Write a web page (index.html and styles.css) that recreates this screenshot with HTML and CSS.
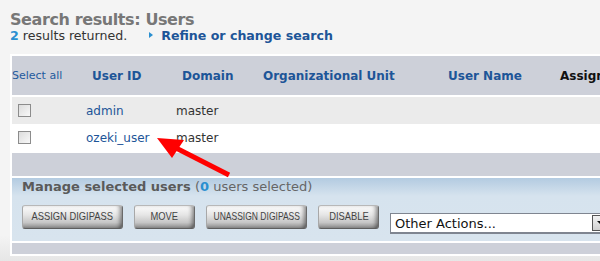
FILE: index.html
```html
<!DOCTYPE html>
<html lang="en">
<head>
<meta charset="UTF-8" />
<title>Search results: Users</title>
<link rel="stylesheet" href="styles.css">
</head>
<body>
  <div class="page">
    <h1>Search results: Users</h1>
    <p class="summary"><b class="count">2</b> results returned. <a class="refine" href="#">Refine or change search</a></p>

    <div class="panel">
      <div class="grid head">
        <span class="select-all">Select all</span>
        <span>User ID</span>
        <span>Domain</span>
        <span>Organizational Unit</span>
        <span>User Name</span>
        <span class="assign">Assigned Digipass</span>
      </div>
      <div class="rows">
        <div class="grid row alt">
          <span><i class="check"></i></span>
          <a href="#">admin</a>
          <span>master</span>
          <span></span>
          <span></span>
          <span></span>
        </div>
        <div class="grid row">
          <span><i class="check"></i></span>
          <a href="#">ozeki_user</a>
          <span>master</span>
          <span></span>
          <span></span>
          <span></span>
        </div>
      </div>
      <div class="band"></div>
      <div class="manage">
        <p class="manage-title"><b>Manage selected users</b> (<b class="count">0</b> users selected)</p>
        <div class="actions">
          <button class="btn wide"><span>ASSIGN DIGIPASS</span></button>
          <button class="btn"><span>MOVE</span></button>
          <button class="btn wide squeeze"><span>UNASSIGN DIGIPASS</span></button>
          <button class="btn"><span>DISABLE</span></button>
          <div class="dropdown">
            <span>Other Actions...</span>
            <i class="dropdown-arrow"></i>
          </div>
        </div>
      </div>
      <div class="band thin"></div>
    </div>
  </div>

  <svg class="pointer" width="600" height="261" viewBox="0 0 600 261">
    <line x1="229" y1="175" x2="176" y2="148" stroke="#f00" stroke-width="5" />
    <polygon points="157,138 184,140 172,158" fill="#f00" />
  </svg>
</body>
</html>
```

FILE: styles.css
```css
* {
  box-sizing: border-box;
}
body {
  margin: 0;
  height: 261px;
  overflow: hidden;
  background: linear-gradient(to bottom, #f4f4f4 0, #f4f4f4 235px, #e6e6e6 261px);
  font-family: "DejaVu Sans", Verdana, sans-serif;
  color: #333;
}
a {
  color: #1d5598;
  text-decoration: none;
}
.page {
  padding: 11px 0 0 10px;
}
h1 {
  margin: 0;
  font-size: 16px;
  line-height: 18px;
  letter-spacing: -0.4px;
  color: #777;
}
.summary {
  margin: 0 0 11px;
  font-size: 12.6px;
  line-height: 14px;
  color: #333;
}
.count {
  color: #2a8fd0;
}
.refine {
  position: relative;
  margin-left: 18px;
  padding-left: 12px;
  font-weight: bold;
  font-size: 12.6px;
  color: #1d5598;
}
.refine::before {
  content: "";
  position: absolute;
  left: 0;
  top: 4px;
  border-left: 4px solid #2a8fd0;
  border-top: 3px solid transparent;
  border-bottom: 3px solid transparent;
}

/* result panel */
.panel {
  width: 720px;
  background: #fff;
  padding: 2px;
  display: flex;
  flex-direction: column;
  gap: 2px;
}
.grid {
  display: grid;
  grid-template-columns: 74px 90px 81px 185px 112px 176px;
  align-items: center;
  font-size: 12px;
}
.head {
  height: 39px;
  background: #cdd0d9;
  font-weight: bold;
  color: #1d5598;
}
.head span {
  padding-left: 6px;
}
.head .select-all {
  padding-left: 0;
  font-weight: normal;
  font-size: 11px;
  color: #1f5a9e;
}
.head .assign {
  color: #111;
  white-space: nowrap;
}
.rows {
  display: flex;
  flex-direction: column;
}
.row {
  height: 27px;
  background: #fff;
}
.row.alt {
  background: #ebebeb;
}
.check {
  display: block;
  width: 13px;
  height: 13px;
  margin-left: 6px;
  border: 1px solid #8c8c8c;
  background: linear-gradient(135deg, #dcdcdc, #f8f8f8);
}
.band {
  height: 23px;
  background: #cdd0d9;
}
.band.thin {
  height: 11px;
}

/* manage selected */
.manage {
  height: 63px;
  padding: 1px 0 0 10px;
  background: linear-gradient(to bottom, #b3cbe1 0, #d6e3ee 18px, #d8e4ee 100%);
}
.manage-title {
  margin: 0;
  font-size: 13px;
  line-height: 16px;
  color: #666;
}
.manage-title b {
  color: #5a5a5a;
}
.manage-title .count {
  color: #2a8fd0;
}
.actions {
  display: flex;
  align-items: flex-start;
  gap: 11px;
  margin-top: 10px;
}
.btn {
  display: flex;
  align-items: center;
  justify-content: center;
  flex: none;
  width: 61px;
  height: 24px;
  padding: 0 0 1px;
  border: 1px solid #8e8e8e;
  border-color: #b8b8b8 #6a6a6a #5e5e5e #a8a8a8;
  border-radius: 3px;
  background: linear-gradient(to bottom, #fbfbfb 0%, #e6e6e6 40%, #c6c6c6 75%, #8c8c8c 100%);
  box-shadow: inset -4px 0 4px -2px rgba(0, 0, 0, 0.45);
  font-family: "Liberation Sans", Arial, sans-serif;
  font-size: 10.4px;
  color: #444;
  white-space: nowrap;
}
.btn span {
  display: inline-block;
  transform: scaleX(0.9);
}
.btn.squeeze span {
  transform: scaleX(0.82);
}
.btn.wide {
  width: 101px;
}
.dropdown {
  position: relative;
  flex: none;
  width: 221px;
  height: 21px;
  margin-top: 8px;
  padding-left: 4px;
  border: 1px solid #7f8590;
  border-width: 1px 1px 2px 1px;
  background: #fff;
  font-size: 13px;
  line-height: 19px;
  color: #111;
}
.dropdown-arrow {
  position: absolute;
  right: 1px;
  top: 1px;
  width: 17px;
  height: 16px;
  border: 1px solid #555;
  background: linear-gradient(to bottom, #f2f2f2, #d0d0d0);
}
.dropdown-arrow::after {
  content: "";
  position: absolute;
  left: 4px;
  top: 5px;
  border-top: 4px solid #111;
  border-left: 4px solid transparent;
  border-right: 4px solid transparent;
}

/* annotation arrow drawn over the table */
.pointer {
  position: absolute;
  left: 0;
  top: 0;
  pointer-events: none;
}
```
